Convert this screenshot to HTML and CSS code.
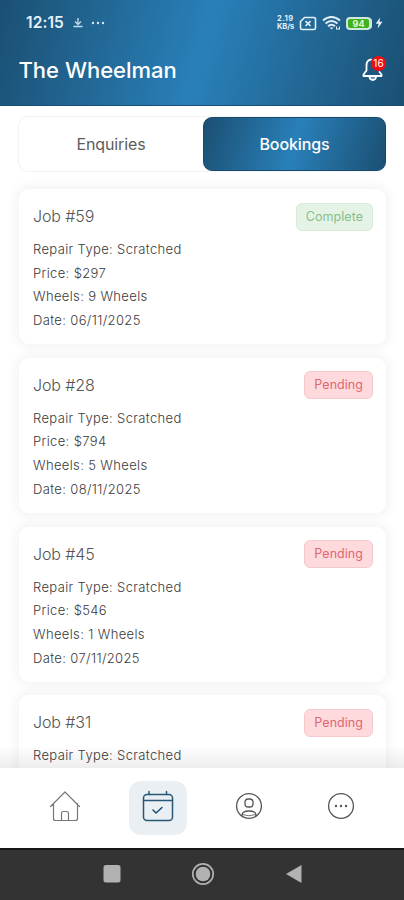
FILE: index.html
```html
<!DOCTYPE html>
<html lang="en">
<head>
<meta charset="utf-8">
<title>The Wheelman</title>
<link rel="stylesheet" href="styles.css">
</head>
<body>
<div class="app">
  <header class="header">
    <div class="status">
      <span class="clock">12:15</span>
      <svg class="download" width="10" height="12" viewBox="0 0 10 12" fill="none" stroke="#c3dcee" stroke-width="1.3"><path d="M5 1v6M2 4.500l3 3 3-3M.5 9.500h9"/></svg>
      <svg class="more" width="14" height="4" viewBox="0 0 14 4" fill="#d6e8f4"><circle cx="2" cy="2" r="1.2"/><circle cx="7" cy="2" r="1.2"/><circle cx="12" cy="2" r="1.2"/></svg>
      <div class="speed"><span>2.19</span><span>KB/s</span></div>
      <svg class="sim" width="18" height="15" viewBox="0 0 18 15" fill="none" stroke="#e4f1fa" stroke-width="1.6" stroke-linejoin="round"><path d="M5.500 1.500H15a1.500 1.500 0 0 1 1.500 1.500V12a1.500 1.500 0 0 1-1.500 1.500H3A1.500 1.500 0 0 1 1.500 12V5.500z"/><path d="M6.500 5.200l5 4.800M11.500 5.200l-5 4.800"/></svg>
      <svg class="wifi" width="19" height="16" viewBox="0 0 19 16" fill="none" stroke="#e4f1fa" stroke-width="1.900"><path d="M1 5.500Q9.500-1.500 18 5.500M3.500 8.500q6-5 12 0M6 11.200q3.500-3 7 0"/><path d="M7.500 12.500L9.500 14.500l2-2z" fill="#e4f1fa" stroke="none"/><path d="M14 14h4M14.500 11.500v2.500M17.500 11.500v2.500" stroke-width="1"/></svg>
      <div class="battery"><span>94</span></div>
      <svg class="bolt" width="8" height="12" viewBox="0 0 8 12" fill="#e4f1fa"><path d="M5 .5L.8 6.800H3.500L2.700 11.500 7.500 4.800H4.500z"/></svg>
    </div>
    <div class="titlebar">
      <h1>The Wheelman</h1>
      <div class="bell">
        <svg width="24" height="28" viewBox="0 0 24 28" fill="none" stroke="#fff" stroke-width="1.800" stroke-linejoin="round" stroke-linecap="round"><path d="M11 3.500C8 4 6.500 6.500 6.500 9.500v5L3.500 18.500v1.500h18v-1.500L19.500 16"/><path d="M9.500 21c.5 4 6 4 6.500 0" fill="#fff" fill-opacity=".35"/></svg>
        <span class="count">16</span>
      </div>
    </div>
  </header>

  <main class="content">
    <div class="tabs">
      <div class="tab">Enquiries</div>
      <div class="tab active">Bookings</div>
    </div>
    <section class="jobs">
      <article class="card">
        <div class="card-head"><h2>Job #59</h2><span class="badge complete">Complete</span></div>
        <p>Repair Type: Scratched</p><p>Price: $297</p><p>Wheels: 9 Wheels</p><p>Date: 06/11/2025</p>
      </article>
      <article class="card">
        <div class="card-head"><h2>Job #28</h2><span class="badge pending">Pending</span></div>
        <p>Repair Type: Scratched</p><p>Price: $794</p><p>Wheels: 5 Wheels</p><p>Date: 08/11/2025</p>
      </article>
      <article class="card">
        <div class="card-head"><h2>Job #45</h2><span class="badge pending">Pending</span></div>
        <p>Repair Type: Scratched</p><p>Price: $546</p><p>Wheels: 1 Wheels</p><p>Date: 07/11/2025</p>
      </article>
      <article class="card">
        <div class="card-head"><h2>Job #31</h2><span class="badge pending">Pending</span></div>
        <p>Repair Type: Scratched</p>
      </article>
    </section>
  </main>

  <nav class="nav">
    <div class="nav-item">
      <svg width="32" height="32" viewBox="0 0 32 32" fill="none" stroke="#777" stroke-width="1.200" stroke-linecap="round" stroke-linejoin="round"><path d="M1.500 16.500L16 2l14.500 14.500M4.500 13.500V28.500q0 2 2 2H26.500q2 0 2-2V13.500M12.500 30.500V23.500q0-2 2-2h3q2 0 2 2v7"/></svg>
    </div>
    <div class="nav-item selected">
      <svg width="32" height="32" viewBox="0 0 32 32" fill="none" stroke="#2a5878" stroke-width="1.500" stroke-linecap="round" stroke-linejoin="round"><rect x="1.500" y="4.500" width="29" height="26" rx="3.500"/><path d="M1.500 10.500h29M7 1.500v3M24.500 1.500v3"/><path d="M11 20l3 3 6-5.500" stroke="#1b4f72"/></svg>
    </div>
    <div class="nav-item">
      <svg width="28" height="28" viewBox="0 0 28 28" fill="none" stroke="#555" stroke-width="1.300"><circle cx="14" cy="14" r="12.400"/><rect x="10" y="7" width="8" height="8" rx="3.300"/><path d="M7 24q-.5-5 7-5t7 5"/><path d="M7 22.500q7 2.500 14 0" stroke-width=".8"/></svg>
    </div>
    <div class="nav-item">
      <svg width="28" height="28" viewBox="0 0 28 28" fill="none" stroke="#555" stroke-width="1.300"><circle cx="14" cy="14" r="12.400"/><g fill="#555" stroke="none"><circle cx="9" cy="14" r="1.200"/><circle cx="14" cy="14" r="1.200"/><circle cx="19" cy="14" r="1.200"/></g></svg>
    </div>
  </nav>

  <footer class="system">
    <svg width="20" height="20" viewBox="0 0 20 20"><rect x="1.500" y="1" width="17" height="17.500" rx="2.500" fill="#b2b2b2"/></svg>
    <svg width="24" height="24" viewBox="0 0 24 24"><circle cx="12" cy="12" r="10.200" fill="none" stroke="#b2b2b2" stroke-width="1.700"/><circle cx="12" cy="12" r="7.300" fill="#b2b2b2"/></svg>
    <svg width="20" height="20" viewBox="0 0 20 20"><path d="M2 10L17.500 1v18z" fill="#b2b2b2"/></svg>
  </footer>
</div>
</body>
</html>
```
FILE: styles.css
```css
* { box-sizing: border-box; margin: 0; padding: 0; }
body { width: 404px; height: 900px; overflow: hidden; background: #fff; font-family: Inter, "Liberation Sans", sans-serif; }
svg { display: block; flex: none; }
.app { width: 404px; height: 900px; display: flex; flex-direction: column; }

.header { flex: none; height: 106px; background: linear-gradient(104.600deg, #1b4f72, #2980b9 50%, #1b4f72); border-bottom: 1px solid #174d77; color: #fff; }
.status { height: 45px; padding: 1px 21px 0 26px; display: flex; align-items: center; color: #e4f1fa; }
.clock { width: 39px; font: 600 15.500px/20px Inter, sans-serif; letter-spacing: .1px; }
.download { margin-left: 8px; }
.more { margin-left: 8px; }
.speed { margin-left: auto; width: 18px; display: flex; flex-direction: column; font-size: 7.500px; line-height: 8px; font-weight: 700; letter-spacing: -.1px; white-space: nowrap; }
.speed span:first-child { letter-spacing: .5px; }
.sim { margin-left: 4px; }
.wifi { margin-left: 5px; }
.battery { margin-left: 5px; width: 25px; height: 13px; border: 2px solid #cfe6df; border-radius: 4px; background: #3eb31b; display: flex; align-items: center; justify-content: center; font-size: 9px; font-weight: 700; line-height: 9px; color: #e8f8df; box-shadow: 2px 0 0 -1px #cfe6df; }
.bolt { margin-left: 4px; }
.titlebar { height: 50px; padding: 0 16px 0 18.500px; display: flex; align-items: center; justify-content: space-between; }
h1 { font-size: 22px; font-weight: 500; line-height: 28px; }
.bell { position: relative; width: 28px; height: 28px; }
.count { position: absolute; left: 11px; top: 0; width: 15px; height: 15px; border-radius: 50%; background: #f00b12; font-size: 10px; line-height: 15px; text-align: center; }

.content { flex: 1; min-height: 0; overflow: hidden; padding: 10px 18px 0; position: relative; }
.content::after { content: ""; position: absolute; left: 0; right: 0; bottom: 0; height: 22px; background: linear-gradient(rgba(0,0,0,0), rgba(0,0,0,.07)); }
.tabs { display: flex; height: 56px; border: 1px solid #f3f3f3; border-right: 0; border-radius: 10px; }
.tab { flex: none; width: 184px; display: flex; align-items: center; justify-content: center; font-size: 16px; letter-spacing: -.1px; color: #5d5d5d; }
.tab.active { width: 183px; color: #fff; border: 1px solid #174b72; border-radius: 9px; background: linear-gradient(106.400deg, #1b4f72, #2980b9 50%, #1b4f72); font-weight: 500; }
.jobs { margin-top: 17px; padding-left: 1px; display: flex; flex-direction: column; gap: 13.750px; }
.card { position: relative; flex: none; height: 155px; padding: 13.500px 13px 0 14px; border-radius: 11px; background: #fff; }
.card::before { content: ""; position: absolute; inset: 0; border-radius: 11px; box-shadow: 0 0 9px 5px rgba(0,0,0,.04); z-index: -1; }
.card-head { height: 28px; display: flex; align-items: center; justify-content: space-between; margin-bottom: 7.500px; }
h2 { font-size: 16px; line-height: 20px; font-weight: 300; letter-spacing: -.1px; color: #555; position: relative; top: -.5px; }
.card p { font-size: 13px; line-height: 23.700px; font-weight: 300; color: #3a3a3a; letter-spacing: .36px; }
.badge { height: 28px; padding: 0 9px; border: 1px solid; border-radius: 6px; font-size: 12.500px; line-height: 26px; letter-spacing: .05px; }
.complete { color: #87bf8a; background: #e4f3e5; border-color: #d8ebda; }
.pending { color: #df6670; background: #ffdadd; border-color: #f5c9cc; }

.nav { flex: none; height: 80px; padding: 0 19px; display: flex; background: #fff; }
.nav-item { width: 92px; height: 75px; display: flex; align-items: center; justify-content: center; }
.nav-item.selected { width: 58px; height: 54px; margin: 12.500px 15.500px 0 18.500px; padding-bottom: 3px; border-radius: 12px; background: #e9eff3; }
.nav-item.selected ~ .nav-item { position: relative; left: 1.500px; }
.system { flex: none; height: 52px; padding-left: 1px; border-top: 2px solid #171717; background: #333; display: flex; align-items: center; justify-content: center; gap: 69px; }
.system svg { margin-top: -2px; }
```
